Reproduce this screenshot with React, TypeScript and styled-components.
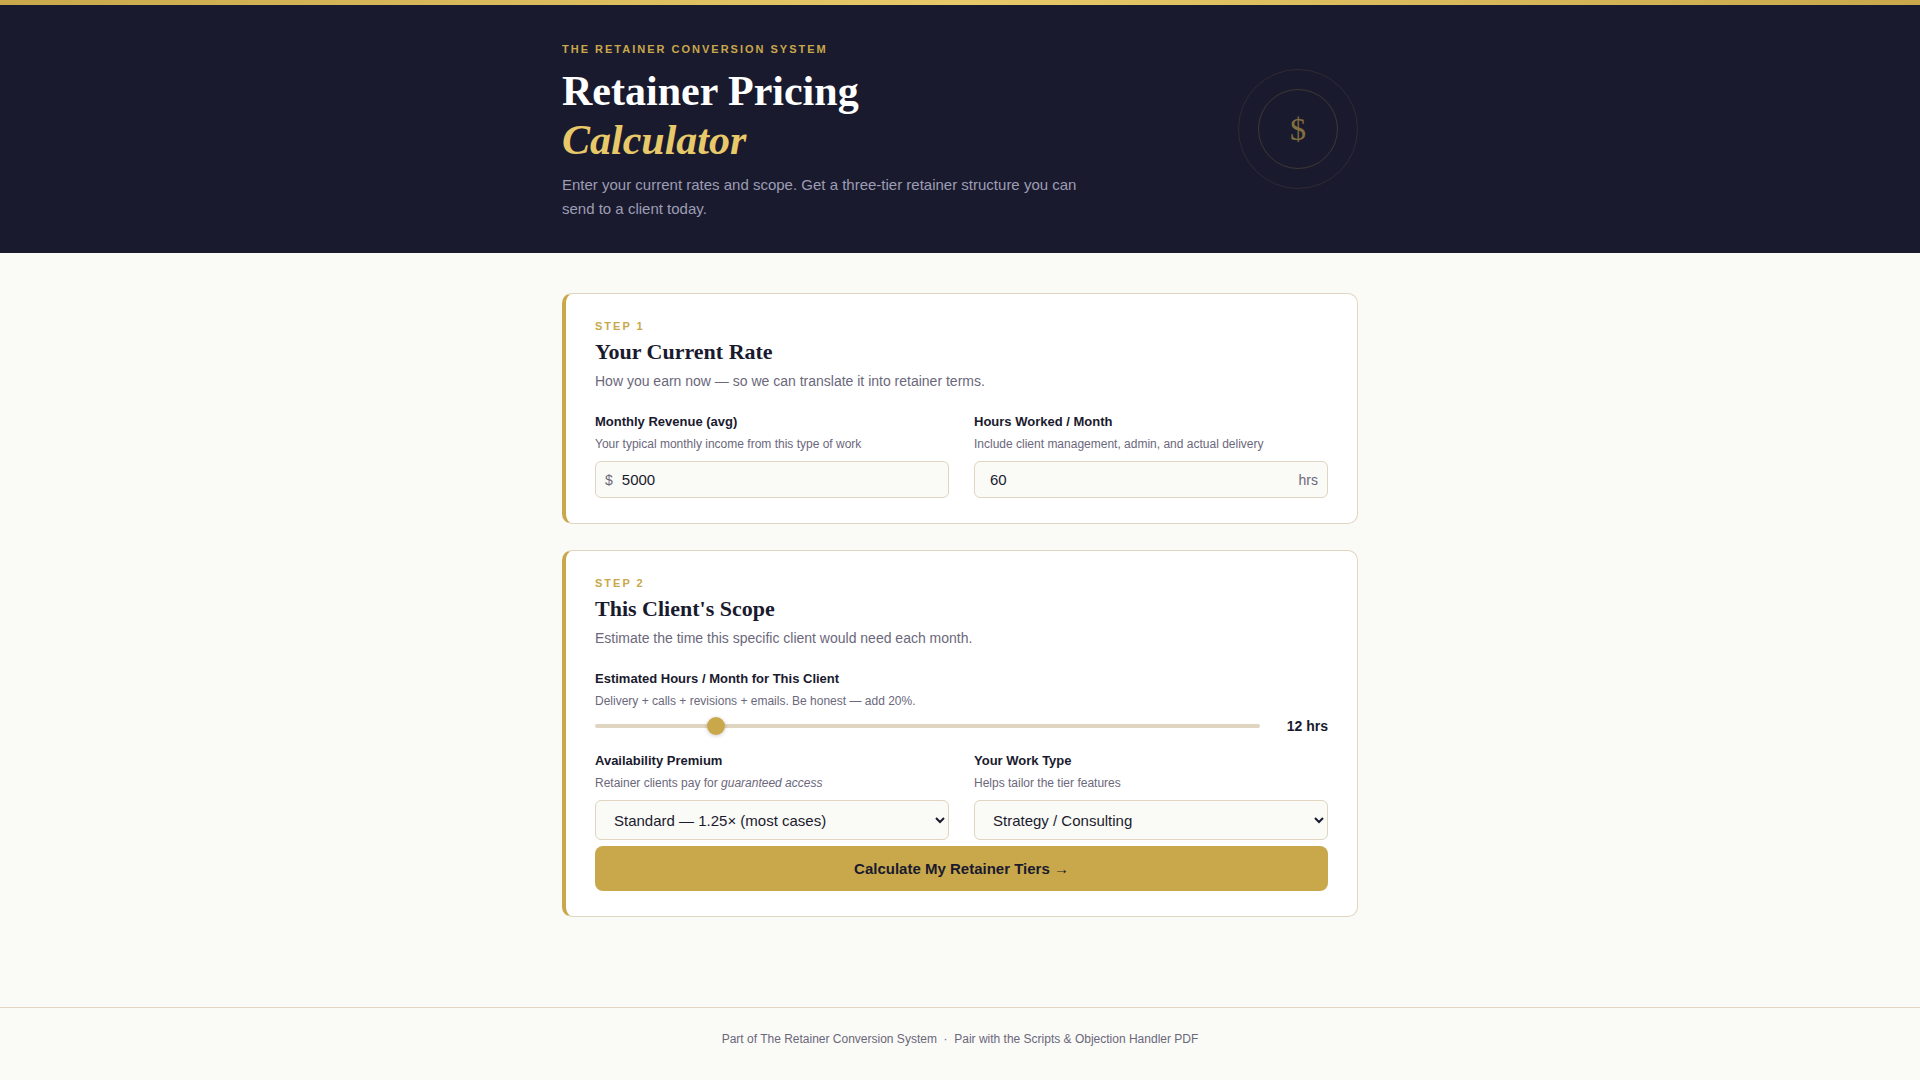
import React, { useState } from "react";
import styled, { createGlobalStyle } from "styled-components";

const color = {
  navy: "#1a1a2e",
  gold: "#c8a84b",
  goldLight: "#e8c96a",
  page: "#fafaf6",
  card: "#ffffff",
  line: "#e0d5c0",
  muted: "#6b687b",
};

const serif = `"Liberation Serif", "Times New Roman", serif`;
const sans = `"Liberation Sans", Arial, sans-serif`;

const GlobalStyle = createGlobalStyle`
  *, *::before, *::after { box-sizing: border-box; }
  body {
    margin: 0;
    background: ${color.page};
    color: ${color.navy};
    font-family: ${sans};
    font-size: 15px;
    line-height: 24px;
  }
  h1, h2, p { margin: 0; }
`;

const Container = styled.div`
  width: 100%;
  max-width: 860px;
  margin: 0 auto;
  padding: 0 32px;
`;

const Header = styled.header`
  background: ${color.navy};

  &::before {
    content: "";
    display: block;
    height: 5px;
    background: linear-gradient(90deg, ${color.gold}, ${color.goldLight}, ${color.gold});
  }
`;

const HeaderInner = styled(Container)`
  display: flex;
  align-items: center;
  justify-content: space-between;
  gap: 32px;
  padding-top: 32px;
  padding-bottom: 32px;
`;

const Eyebrow = styled.p`
  margin-bottom: 6px;
  color: ${color.gold};
  font-size: 11px;
  font-weight: 700;
  letter-spacing: 2px;
  text-transform: uppercase;
`;

const Title = styled.h1`
  margin-bottom: 8px;
  color: #fff;
  font-family: ${serif};
  font-size: 42px;
  font-weight: 700;
  line-height: 49px;

  em {
    color: ${color.goldLight};
  }
`;

const Lead = styled.p`
  max-width: 520px;
  color: #9d9db4;
`;

const Emblem = styled.div`
  display: grid;
  place-items: center;
  flex: none;
  width: 120px;
  height: 120px;
  border: 1px solid rgba(200, 168, 75, 0.12);
  border-radius: 50%;
`;

const EmblemCore = styled.div`
  display: grid;
  place-items: center;
  width: 80px;
  height: 80px;
  border: 1px solid rgba(200, 168, 75, 0.2);
  border-radius: 50%;
`;

const EmblemSign = styled.span`
  color: ${color.gold};
  font-family: ${serif};
  font-size: 32px;
  opacity: 0.6;
`;

const Main = styled(Container).attrs({ as: "main" })`
  display: flex;
  flex-direction: column;
  gap: 26px;
  padding-top: 40px;
  padding-bottom: 90px;
`;

const Card = styled.section`
  padding: 26px 29px 25px;
  background: ${color.card};
  border: 1px solid ${color.line};
  border-left: 4px solid ${color.gold};
  border-radius: 10px;
`;

const Step = styled.p`
  margin-bottom: 6px;
  color: ${color.gold};
  font-size: 11px;
  font-weight: 700;
  line-height: 12px;
  letter-spacing: 2px;
  text-transform: uppercase;
`;

const CardTitle = styled.h2`
  margin-bottom: 4px;
  font-family: ${serif};
  font-size: 22px;
  font-weight: 700;
  line-height: 28px;
`;

const CardText = styled.p`
  margin-bottom: 20px;
  color: ${color.muted};
  font-size: 14px;
  line-height: 22px;
`;

const FieldGrid = styled.div`
  display: grid;
  grid-template-columns: 1fr 1fr;
  gap: 25px;
`;

const Field = styled.div`
  display: flex;
  flex-direction: column;
`;

const Label = styled.label`
  margin-bottom: 3px;
  font-size: 13px;
  font-weight: 700;
  line-height: 20px;
`;

const Hint = styled.span<{ $gap?: number }>`
  margin-bottom: ${(p) => p.$gap ?? 8}px;
  color: ${color.muted};
  font-size: 12px;
  line-height: 18px;
`;

const InputShell = styled.div`
  display: flex;
  align-items: center;
  height: 37px;
  background: ${color.page};
  border: 1px solid ${color.line};
  border-radius: 6px;

  &:focus-within {
    border-color: ${color.gold};
  }
`;

const Affix = styled.span`
  padding: 0 9px;
  color: ${color.muted};
  font-size: 14px;
`;

const NumberInput = styled.input<{ $indent: number }>`
  flex: 1;
  min-width: 0;
  padding: 0 0 0 ${(p) => p.$indent}px;
  background: transparent;
  border: 0;
  outline: 0;
  color: ${color.navy};
  font-family: ${sans};
  font-size: 15px;
`;

const SliderRow = styled.div`
  display: flex;
  align-items: center;
  gap: 16px;
  margin-bottom: 15px;
`;

const Slider = styled.input`
  appearance: none;
  flex: 1;
  min-width: 0;
  height: 4px;
  margin: 0;
  background: ${color.line};
  border-radius: 2px;
  outline: 0;

  &::-webkit-slider-thumb {
    appearance: none;
    width: 18px;
    height: 18px;
    background: ${color.gold};
    border-radius: 50%;
    box-shadow: 0 1px 4px rgba(0, 0, 0, 0.2);
    cursor: pointer;
  }
`;

const SliderValue = styled.output`
  min-width: 52px;
  font-size: 14px;
  font-weight: 700;
  line-height: 20px;
  text-align: right;
`;

const Select = styled.select`
  width: 100%;
  height: 40px;
  padding: 0 0 0 14px;
  background: ${color.page};
  border: 1px solid ${color.line};
  border-radius: 6px;
  color: ${color.navy};
  font-family: ${sans};
  font-size: 15px;
`;

const SubmitButton = styled.button`
  display: block;
  width: 100%;
  height: 45px;
  margin-top: 6px;
  background: ${color.gold};
  border: 0;
  border-radius: 8px;
  color: ${color.navy};
  font-family: ${sans};
  font-size: 15px;
  font-weight: 700;
  cursor: pointer;
`;

const Footer = styled.footer`
  padding: 19px 32px;
  border-top: 1px solid ${color.line};
  color: ${color.muted};
  font-size: 12px;
  text-align: center;
`;

export default function App() {
  const [revenue, setRevenue] = useState("5000");
  const [worked, setWorked] = useState("60");
  const [hours, setHours] = useState(12);

  return (
    <>
      <GlobalStyle />
      <Header>
        <HeaderInner>
          <div>
            <Eyebrow>The Retainer Conversion System</Eyebrow>
            <Title>
              Retainer Pricing
              <br />
              <em>Calculator</em>
            </Title>
            <Lead>
              Enter your current rates and scope. Get a three-tier retainer structure you can send to a client today.
            </Lead>
          </div>
          <Emblem aria-hidden="true">
            <EmblemCore>
              <EmblemSign>$</EmblemSign>
            </EmblemCore>
          </Emblem>
        </HeaderInner>
      </Header>

      <Main>
        <Card>
          <Step>Step 1</Step>
          <CardTitle>Your Current Rate</CardTitle>
          <CardText>How you earn now — so we can translate it into retainer terms.</CardText>
          <FieldGrid>
            <Field>
              <Label htmlFor="revenue">Monthly Revenue (avg)</Label>
              <Hint>Your typical monthly income from this type of work</Hint>
              <InputShell>
                <Affix>$</Affix>
                <NumberInput
                  id="revenue"
                  inputMode="numeric"
                  $indent={0}
                  value={revenue}
                  onChange={(e) => setRevenue(e.target.value)}
                />
              </InputShell>
            </Field>
            <Field>
              <Label htmlFor="worked">Hours Worked / Month</Label>
              <Hint>Include client management, admin, and actual delivery</Hint>
              <InputShell>
                <NumberInput
                  id="worked"
                  inputMode="numeric"
                  $indent={15}
                  value={worked}
                  onChange={(e) => setWorked(e.target.value)}
                />
                <Affix>hrs</Affix>
              </InputShell>
            </Field>
          </FieldGrid>
        </Card>

        <Card>
          <Step>Step 2</Step>
          <CardTitle>This Client's Scope</CardTitle>
          <CardText>Estimate the time this specific client would need each month.</CardText>
          <Field>
            <Label htmlFor="scope">Estimated Hours / Month for This Client</Label>
            <Hint $gap={6}>Delivery + calls + revisions + emails. Be honest — add 20%.</Hint>
            <SliderRow>
              <Slider
                id="scope"
                type="range"
                min={2}
                max={60}
                value={hours}
                onChange={(e) => setHours(Number(e.target.value))}
              />
              <SliderValue htmlFor="scope">{hours} hrs</SliderValue>
            </SliderRow>
          </Field>
          <FieldGrid>
            <Field>
              <Label htmlFor="premium">Availability Premium</Label>
              <Hint>
                Retainer clients pay for <em>guaranteed access</em>
              </Hint>
              <Select id="premium" defaultValue="1.25">
                <option value="1.25">Standard — 1.25× (most cases)</option>
              </Select>
            </Field>
            <Field>
              <Label htmlFor="work">Your Work Type</Label>
              <Hint>Helps tailor the tier features</Hint>
              <Select id="work" defaultValue="strategy">
                <option value="strategy">Strategy / Consulting</option>
              </Select>
            </Field>
          </FieldGrid>
          <SubmitButton type="button">Calculate My Retainer Tiers →</SubmitButton>
        </Card>
      </Main>

      <Footer>
        Part of The Retainer Conversion System &nbsp;·&nbsp; Pair with the Scripts &amp; Objection Handler PDF
      </Footer>
    </>
  );
}
